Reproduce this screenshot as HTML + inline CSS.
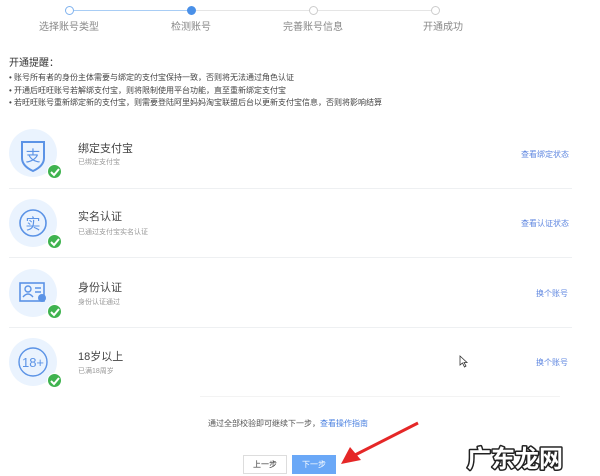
<!DOCTYPE html>
<html><head><meta charset="utf-8"><style>
*{margin:0;padding:0;box-sizing:border-box}
body{width:600px;height:476px;background:#fff;font-family:"Liberation Sans","Noto Sans CJK SC",sans-serif;position:relative;overflow:hidden;color:#333}
.a{position:absolute;white-space:nowrap}
.dot{position:absolute;width:9px;height:9px;border-radius:50%;border:1px solid #ccc;background:#fff}
.lab{position:absolute;font-size:10px;color:#888;top:18px;transform:translateX(-50%)}
.tip{font-size:8px;color:#444;left:9px}
.ic{position:absolute;left:9px;width:48px;height:48px;border-radius:50%;background:#eaf3fe}
.ck{position:absolute;right:-5px;bottom:-2px;width:15px;height:15px;border-radius:50%;background:#3fb34f;border:1px solid #fff}
.t{font-size:11px;color:#444;left:78px}
.s{font-size:7px;color:#999;left:78px}
.lk{font-size:8px;color:#5f87e0;right:32px}
.hr{position:absolute;left:9px;width:563px;height:1px;background:#eef0f2}
</style></head><body>
<div class="a" style="left:74px;top:10px;width:117px;height:1px;background:#a8cdf5"></div>
<div class="a" style="left:196px;top:10px;width:239px;height:1px;background:#e5e5e5"></div>
<div class="dot" style="left:65px;top:6px;border-color:#7fb2ee"></div>
<div class="dot" style="left:187px;top:6px;background:#4a90e8;border-color:#4a90e8"></div>
<div class="dot" style="left:309px;top:6px"></div>
<div class="dot" style="left:431px;top:6px"></div>
<div class="lab" style="left:69px">选择账号类型</div>
<div class="lab" style="left:191px">检测账号</div>
<div class="lab" style="left:313px">完善账号信息</div>
<div class="lab" style="left:443px">开通成功</div>

<div class="a" style="left:9px;top:54px;font-size:10px;color:#333">开通提醒：</div>
<div class="a tip" style="top:72px">• 账号所有者的身份主体需要与绑定的支付宝保持一致，否则将无法通过角色认证</div>
<div class="a tip" style="top:85px">• 开通后旺旺账号若解绑支付宝，则将限制使用平台功能，直至重新绑定支付宝</div>
<div class="a tip" style="top:97px">• 若旺旺账号重新绑定新的支付宝，则需要登陆阿里妈妈淘宝联盟后台以更新支付宝信息，否则将影响结算</div>

<div class="ic" style="top:129px"><svg width="48" height="48"><path d="M13 13 L35 13 L35 29 Q35 37 24 42 Q13 37 13 29 Z" fill="none" stroke="#5b93e6" stroke-width="2"/><text x="24" y="32" font-size="15" fill="#5b93e6" text-anchor="middle" font-family="Noto Sans CJK SC">支</text></svg><div class="ck"><svg width="13" height="13"><path d="M3 7 L6 10 L11 4" stroke="#fff" stroke-width="2" fill="none"/></svg></div></div>
<div class="a t" style="top:140px">绑定支付宝</div>
<div class="a s" style="top:157px">已绑定支付宝</div>
<div class="a lk" style="top:149px;right:31px">查看绑定状态</div>
<div class="hr" style="top:188px"></div>

<div class="ic" style="top:199px"><svg width="48" height="48"><circle cx="24" cy="24" r="13" fill="none" stroke="#5b93e6" stroke-width="1.6"/><text x="24" y="30" font-size="15" fill="#5b93e6" text-anchor="middle" font-family="Noto Sans CJK SC">实</text></svg><div class="ck"><svg width="13" height="13"><path d="M3 7 L6 10 L11 4" stroke="#fff" stroke-width="2" fill="none"/></svg></div></div>
<div class="a t" style="top:208px">实名认证</div>
<div class="a s" style="top:227px">已通过支付宝实名认证</div>
<div class="a lk" style="top:218px;right:31px">查看认证状态</div>
<div class="hr" style="top:257px"></div>

<div class="ic" style="top:269px"><svg width="48" height="48"><rect x="11" y="14" width="24" height="18" fill="none" stroke="#5b93e6" stroke-width="1.6"/><circle cx="19" cy="20" r="3" fill="none" stroke="#5b93e6" stroke-width="1.4"/><path d="M14 28 Q19 22 24 28 M26 19h6 M26 23h6" stroke="#5b93e6" stroke-width="1.4" fill="none"/><circle cx="33" cy="29" r="4" fill="#5b93e6"/></svg><div class="ck"><svg width="13" height="13"><path d="M3 7 L6 10 L11 4" stroke="#fff" stroke-width="2" fill="none"/></svg></div></div>
<div class="a t" style="top:279px">身份认证</div>
<div class="a s" style="top:297px">身份认证通过</div>
<div class="a lk" style="top:288px">换个账号</div>
<div class="hr" style="top:327px"></div>

<div class="ic" style="top:338px"><svg width="48" height="48"><circle cx="24" cy="24" r="14" fill="none" stroke="#5b93e6" stroke-width="1.4"/><text x="24" y="29" font-size="13" fill="#5b93e6" text-anchor="middle">18+</text></svg><div class="ck"><svg width="13" height="13"><path d="M3 7 L6 10 L11 4" stroke="#fff" stroke-width="2" fill="none"/></svg></div></div>
<div class="a t" style="top:348px">18岁以上</div>
<div class="a s" style="top:366px">已满18周岁</div>
<div class="a lk" style="top:357px">换个账号</div>
<svg class="a" style="left:459px;top:355px" width="10" height="13"><path d="M1 1 L1 10 L3.5 8 L5.5 12 L7 11 L5 7.5 L8 7.5 Z" fill="#fff" stroke="#333" stroke-width="0.8"/></svg>
<div class="hr" style="top:396px;width:360px;left:200px;background:#f3f3f3"></div>

<div class="a" style="left:208px;top:418px;font-size:8px;color:#555">通过全部校验即可继续下一步，<span style="color:#4a80e0">查看操作指南</span></div>
<div class="a" style="left:243px;top:455px;width:44px;height:19px;border:1px solid #ddd;background:#fff;font-size:8px;color:#333;text-align:center;line-height:17px">上一步</div>
<div class="a" style="left:292px;top:455px;width:44px;height:19px;background:#6aa8f7;font-size:8px;color:#fff;text-align:center;line-height:19px">下一步</div>
<svg class="a" style="left:335px;top:420px" width="90" height="50"><path d="M83 3 L20 35" stroke="#e52727" stroke-width="3"/><path d="M6 44 L15 27 L26 40 Z" fill="#e52727"/></svg>
<svg class="a" style="left:462px;top:432px" width="110" height="44"><text x="5" y="35" font-size="24" font-weight="bold" font-family="Noto Sans CJK SC,sans-serif" fill="#fff" stroke="#222" stroke-width="3" stroke-linejoin="round" paint-order="stroke">广东龙网</text></svg>
</body></html>
